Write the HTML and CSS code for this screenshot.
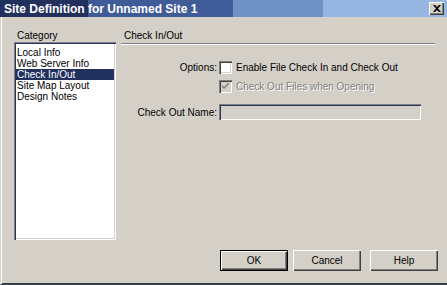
FILE: index.html
```html
<!DOCTYPE html>
<html lang="en">
<head>
  <meta charset="UTF-8" />
  <meta name="viewport" content="width=device-width, initial-scale=1.0" />
  <title>Site Definition</title>
  <link rel="stylesheet" href="styles.css">
</head>
<body>
  <div class="window">
    <div class="titlebar">
      <span class="title">Site Definition for Unnamed Site 1</span>
      <span class="close">
        <svg width="8" height="7" viewBox="0 0 8 7"><path d="M0 0h2l2 2 2-2h2L5 3.5 8 7H6L4 5 2 7H0l3-3.5z" fill="#000"/></svg>
      </span>
    </div>
    <div class="content">
      <div class="sidebar">
        <div class="label">Category</div>
        <ul class="list">
          <li>Local Info</li>
          <li>Web Server Info</li>
          <li class="selected">Check In/Out</li>
          <li>Site Map Layout</li>
          <li>Design Notes</li>
        </ul>
      </div>
      <div class="main">
        <div class="header">Check In/Out</div>
        <div class="rule"></div>
        <div class="form">
          <div class="flabel">Options:</div>
          <label class="check"><span class="box"></span>Enable File Check In and Check Out</label>
          <div></div>
          <label class="check disabled"><span class="box checked">
            <svg width="7" height="7" viewBox="0 0 7 7"><path d="M0 2l2 2 5-5v2L2 6 0 4z" fill="#808080"/></svg>
          </span>Check Out Files when Opening</label>
          <div class="flabel name">Check Out Name:</div>
          <div class="field"></div>
        </div>
      </div>
    </div>
    <div class="footer">
      <button class="btn default">OK</button>
      <button class="btn">Cancel</button>
      <button class="btn help">Help</button>
    </div>
  </div>
</body>
</html>
```

FILE: styles.css
```css
* {
  box-sizing: border-box;
}
body {
  margin: 0;
  font-family: "Liberation Sans", Arial, sans-serif;
  font-size: 10px;
  color: #000;
}
.window {
  width: 447px;
  height: 285px;
  background: #d4d0c8;
  border-left: 1px solid #d4d0c8;
  border-bottom: 1px solid #404040;
  display: flex;
  flex-direction: column;
  box-shadow: inset 1px 0 #fff, inset 0 -1px #2c3a5c;
}
.titlebar {
  height: 17px;
  margin-left: -1px;
  display: flex;
  align-items: center;
  justify-content: space-between;
  padding: 0 3px 0 4px;
  background: linear-gradient(to right, #22305e 0, #22305e 88px, #3f5c99 88px, #3f5c99 233px, #6f91c4 233px, #6f91c4 323px, #95b6e1 323px);
}
.title {
  color: #fff;
  font-weight: bold;
  font-size: 12px;
}
.close {
  width: 15px;
  height: 13px;
  background: #d4d0c8;
  display: flex;
  align-items: center;
  justify-content: center;
  box-shadow: inset 1px 1px #fff, inset -1px -1px #404040, inset -2px -2px #808080;
}
.content {
  display: flex;
  padding: 12px 12px 0 13px;
  gap: 5px;
}
.sidebar {
  width: 102px;
}
.label {
  height: 13px;
  padding-left: 3px;
  line-height: 13px;
}
.list {
  margin: 0;
  padding: 5px 0 0 2px;
  list-style: none;
  height: 198px;
  background: #fff;
  box-shadow: inset 1px 1px #808080, inset 2px 2px #26365f, inset -1px -1px #fff, inset -2px -2px #d4d0c8;
}
.list li {
  height: 11px;
  line-height: 11px;
  padding-left: 1px;
  margin-right: 2px;
  white-space: nowrap;
}
.list li.selected {
  background: #22305e;
  color: #fff;
}
.main {
  flex: 1;
}
.header {
  height: 13px;
  line-height: 13px;
  padding-left: 3px;
}
.rule {
  height: 2px;
  margin-top: 1px;
  border-top: 1px solid #808080;
  border-bottom: 1px solid #fff;
}
.form {
  display: grid;
  grid-template-columns: 96px 1fr;
  column-gap: 2px;
  row-gap: 6px;
  margin-top: 16px;
  align-items: center;
}
.flabel {
  text-align: right;
}
.check {
  display: flex;
  align-items: center;
  gap: 4px;
  height: 13px;
}
.box {
  width: 13px;
  height: 13px;
  background: #fff;
  display: flex;
  align-items: center;
  justify-content: center;
  box-shadow: inset 1px 1px #808080, inset 2px 2px #404040, inset -1px -1px #fff, inset -2px -2px #d4d0c8;
}
.box.checked {
  background: #d4d0c8;
}
.disabled {
  color: #808080;
  text-shadow: 1px 1px #fff;
}
.name {
  margin-top: 5px;
}
.field {
  margin-top: 5px;
  width: 202px;
  height: 16px;
  background: #d4d0c8;
  box-shadow: inset 1px 1px #808080, inset 2px 2px #26365f, inset -1px -1px #fff, inset -2px -2px #d4d0c8;
}
.footer {
  display: flex;
  justify-content: flex-end;
  padding: 10px 9px 0 0;
}
.btn {
  width: 68px;
  height: 21px;
  margin-left: 5px;
  font-family: inherit;
  font-size: 10px;
  background: #d4d0c8;
  border: none;
  padding: 0;
  box-shadow: inset 1px 1px #fff, inset -1px -1px #404040, inset -2px -2px #808080;
}
.btn.default {
  box-shadow: inset 0 0 0 1px #000, inset 2px 2px #fff, inset -2px -2px #404040, inset -3px -3px #808080;
}
.btn.help {
  margin-left: 9px;
}
```
